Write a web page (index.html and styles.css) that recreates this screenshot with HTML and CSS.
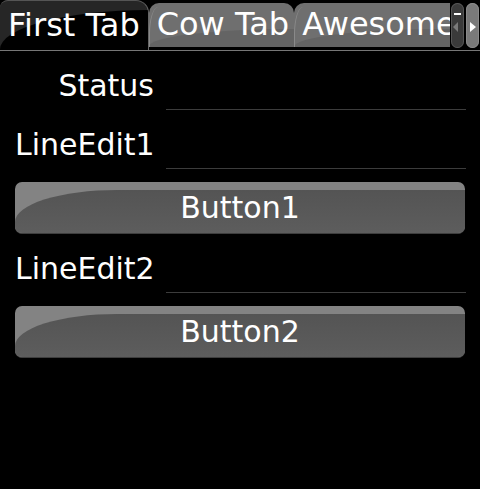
FILE: index.html
```html
<!DOCTYPE html>
<html>
<head>
<meta charset="utf-8">
<link rel="stylesheet" href="styles.css">
</head>
<body>
<div class="tabbar">
  <div class="tabs">
    <div class="tab tab-active"><span class="tab-text">First Tab</span></div>
    <div class="tab"><span class="tab-text">Cow Tab</span></div>
    <div class="tab"><span class="tab-text">Awesome</span></div>
  </div>
  <div class="scroller">
    <div class="pill pill-left">
      <svg width="13" height="45" viewBox="0 0 13 45"><rect x="3" y="10" width="7" height="2" fill="#fff"/><path d="M7 19 L2 24 L7 29 Z" fill="#7a7a7a"/></svg>
    </div>
    <div class="pill pill-right">
      <svg width="13" height="45" viewBox="0 0 13 45"><path d="M4 19 L10 24 L4 29 Z" fill="#fff"/></svg>
    </div>
  </div>
</div>
<div class="form">
  <div class="row"><div class="lbl">Status</div><div class="field"></div></div>
  <div class="row"><div class="lbl">LineEdit1</div><div class="field"></div></div>
  <div class="btn"><span class="btn-text">Button1</span></div>
  <div class="row"><div class="lbl">LineEdit2</div><div class="field"></div></div>
  <div class="btn"><span class="btn-text">Button2</span></div>
</div>
</body>
</html>
```
FILE: styles.css
```css
html, body {
  margin: 0;
  padding: 0;
}
body {
  background: #000;
  color: #fff;
  font-family: "DejaVu Sans", sans-serif;
  width: 480px;
  height: 489px;
  overflow: hidden;
}
.tabbar {
  display: flex;
  height: 50px;
  border-bottom: 1px solid #777;
}
.tabs {
  flex: 1;
  min-width: 0;
  display: flex;
  align-items: flex-start;
  overflow: hidden;
}
.tab {
  position: relative;
  flex: none;
  box-sizing: border-box;
  height: 44px;
  margin-top: 3px;
  padding: 0 5px 0 8px;
  font-size: 32px;
  line-height: 42px;
  white-space: nowrap;
  background: #6f6f6f;
  border-radius: 10px 10px 0 0;
  overflow: hidden;
}
.tab::before {
  content: "";
  position: absolute;
  left: 0;
  right: 0;
  top: 26px;
  bottom: 0;
  background: #646464;
  border-top-left-radius: 150px 18px;
}
.tab::after {
  content: "";
  position: absolute;
  left: 0;
  top: 4px;
  bottom: 0;
  width: 8px;
  border-left: 1px solid #8a8a8a;
  border-top-left-radius: 10px 30px;
}
.tab-active {
  height: 50px;
  margin-top: 0;
  padding-top: 3px;
  padding-left: 8px;
  padding-right: 8px;
  background: #262626;
  border-top: 1px solid #555;
  border-right: 1px solid #666;
  border-radius: 8px 13px 0 0;
}
.tab-active::before {
  top: 9px;
  background: #000;
  border-top-left-radius: 150px 40px;
}
.tab-active::after {
  display: none;
}
.tab-text {
  position: relative;
  z-index: 1;
}
.scroller {
  flex: none;
  width: 30px;
  display: flex;
  gap: 2px;
  padding: 3px 0 2px 1px;
  box-sizing: border-box;
}
.pill {
  width: 13px;
  height: 45px;
  border-radius: 7px;
  box-sizing: border-box;
}
.pill svg {
  display: block;
}
.pill-left {
  background: #3a3a3a;
  box-shadow: inset 0 0 0 1px #555;
}
.pill-right {
  background: #7a7a7a;
  box-shadow: inset 0 0 0 1px #8a8a8a;
}
.form {
  padding: 0 15px;
}
.row {
  display: grid;
  grid-template-columns: 139px 1fr;
  column-gap: 12px;
  height: 59px;
}
.lbl {
  text-align: right;
  font-size: 30px;
  line-height: 35px;
  padding-top: 17px;
  white-space: nowrap;
}
.field {
  border-bottom: 1px solid #3c3c3c;
  margin-right: -1px;
}
.btn {
  position: relative;
  height: 52px;
  margin-top: 13px;
  box-sizing: border-box;
  border-radius: 7px;
  background: #838383;
  border-bottom: 1px solid #3e3e3e;
  overflow: hidden;
  display: flex;
  align-items: center;
  justify-content: center;
  font-size: 30px;
  line-height: 35px;
}
.btn::before {
  content: "";
  position: absolute;
  left: 0;
  right: 0;
  top: 8px;
  bottom: 0;
  background: linear-gradient(#545454, #5d5d5d);
  border-top-left-radius: 102px 32px;
}
.btn-text {
  position: relative;
  z-index: 1;
}
```
